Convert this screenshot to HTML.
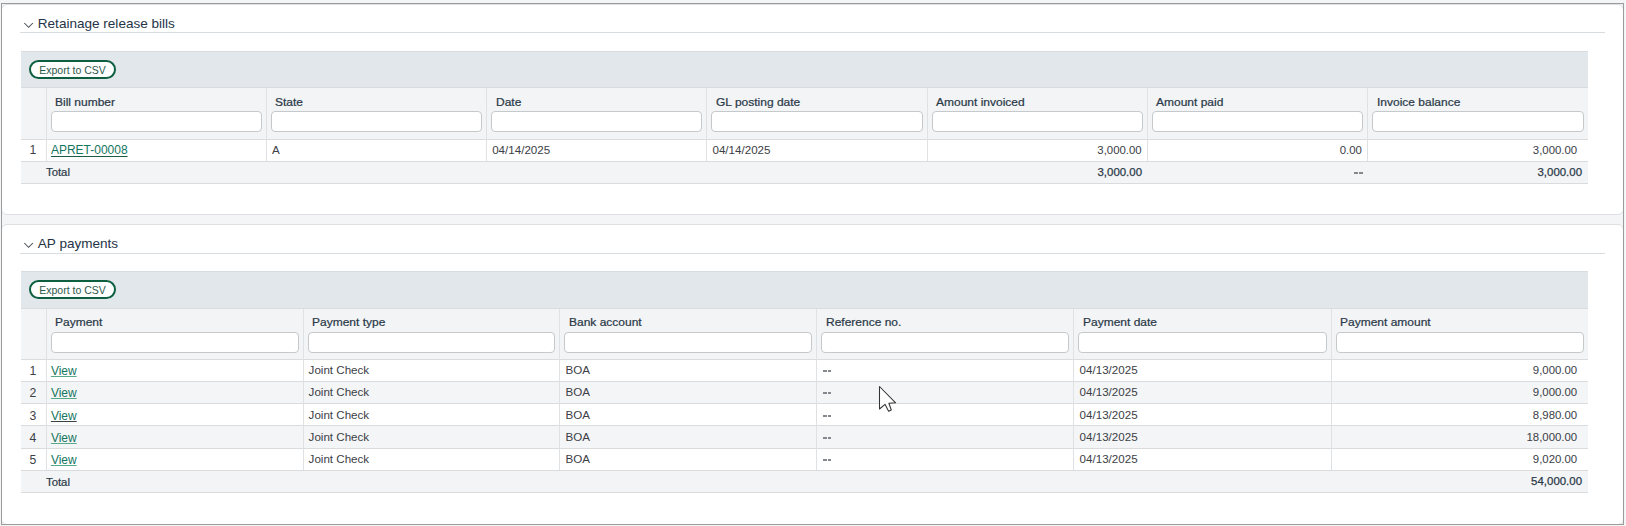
<!DOCTYPE html>
<html><head><meta charset="utf-8"><title>AP payments</title>
<style>
html,body{margin:0;padding:0}
body{width:1626px;height:526px;overflow:hidden;position:relative;background:#f4f5f6;font-family:"Liberation Sans",sans-serif}
.r{position:absolute}
.t{position:absolute;line-height:20px;white-space:nowrap}
.frame{position:absolute;left:1px;top:3px;width:1623px;height:522px;box-sizing:border-box;border:1px solid #9b9b9b;background:#f4f5f7}
.card{position:absolute;left:1px;width:1623px;box-sizing:border-box;border:1px solid #dedfe2;border-radius:6px;background:#fff}
.btn{position:absolute;width:87px;height:19px;box-sizing:border-box;border:2px solid #0d5f3f;border-radius:10px;background:#fff;color:#2b594a;font-size:10.5px;line-height:17.6px;text-align:center;white-space:nowrap}
.inp{position:absolute;box-sizing:border-box;border:1px solid #c5c9cb;border-radius:4px;background:#fff}
</style></head><body>
<div class="frame"></div>
<div class="card" style="top:4px;height:211px"></div>
<div class="card" style="top:224px;height:301px"></div>
<div class="frame" style="background:transparent;z-index:5"></div>
<svg class="r" style="left:22px;top:19.7px" width="14" height="10" viewBox="0 0 14 10"><polyline points="2.3,3 6.6,7.3 10.9,3" fill="none" stroke="#4a4f55" stroke-width="1.05"/></svg>
<div class="t" style="left:37.80px;top:13.75px;font-size:13.55px;color:#253447;font-weight:normal;">Retainage release bills</div>
<div class="r" style="left:20px;top:32px;width:1585px;height:1px;background:#d7dce0"></div>
<div class="r" style="left:21px;top:51px;width:1567px;height:36px;background:#e1e7ea;border-top:1px solid #d6dce0;box-sizing:border-box"></div>
<div class="btn" style="left:29px;top:60px">Export to CSV</div>
<div class="r" style="left:21px;top:87px;width:1567px;height:52px;background:#f3f4f6;border-top:1px solid #d9dbdd;box-sizing:border-box"></div>
<div class="r" style="left:21px;top:139px;width:1567px;height:22px;background:#ffffff;border-top:1px solid #d9dbdd;box-sizing:border-box"></div>
<div class="r" style="left:21px;top:161px;width:1567px;height:23px;background:#f3f4f6;border-top:1px solid #d9dbdd;border-bottom:1px solid #d9dbdd;box-sizing:border-box"></div>
<div class="r" style="left:46px;top:88px;width:1px;height:73px;background:#dfe2e5"></div>
<div class="r" style="left:266px;top:88px;width:1px;height:73px;background:#dfe2e5"></div>
<div class="r" style="left:486px;top:88px;width:1px;height:73px;background:#dfe2e5"></div>
<div class="r" style="left:706px;top:88px;width:1px;height:73px;background:#dfe2e5"></div>
<div class="r" style="left:927px;top:88px;width:1px;height:73px;background:#dfe2e5"></div>
<div class="r" style="left:1147px;top:88px;width:1px;height:73px;background:#dfe2e5"></div>
<div class="r" style="left:1367px;top:88px;width:1px;height:73px;background:#dfe2e5"></div>
<div class="t" style="left:55.00px;top:92.29px;font-size:11.0px;color:#2b3a49;font-weight:normal;-webkit-text-stroke:0.22px #2b3a49;transform:scaleX(1.09);transform-origin:0 0">Bill number</div>
<div class="inp" style="left:51px;top:111px;width:211px;height:21px"></div>
<div class="t" style="left:275.29px;top:92.29px;font-size:11.0px;color:#2b3a49;font-weight:normal;-webkit-text-stroke:0.22px #2b3a49;transform:scaleX(1.09);transform-origin:0 0">State</div>
<div class="inp" style="left:271px;top:111px;width:211px;height:21px"></div>
<div class="t" style="left:495.57px;top:92.29px;font-size:11.0px;color:#2b3a49;font-weight:normal;-webkit-text-stroke:0.22px #2b3a49;transform:scaleX(1.09);transform-origin:0 0">Date</div>
<div class="inp" style="left:491px;top:111px;width:211px;height:21px"></div>
<div class="t" style="left:715.86px;top:92.29px;font-size:11.0px;color:#2b3a49;font-weight:normal;-webkit-text-stroke:0.22px #2b3a49;transform:scaleX(1.09);transform-origin:0 0">GL posting date</div>
<div class="inp" style="left:711px;top:111px;width:212px;height:21px"></div>
<div class="t" style="left:936.14px;top:92.29px;font-size:11.0px;color:#2b3a49;font-weight:normal;-webkit-text-stroke:0.22px #2b3a49;transform:scaleX(1.09);transform-origin:0 0">Amount invoiced</div>
<div class="inp" style="left:932px;top:111px;width:211px;height:21px"></div>
<div class="t" style="left:1156.43px;top:92.29px;font-size:11.0px;color:#2b3a49;font-weight:normal;-webkit-text-stroke:0.22px #2b3a49;transform:scaleX(1.09);transform-origin:0 0">Amount paid</div>
<div class="inp" style="left:1152px;top:111px;width:211px;height:21px"></div>
<div class="t" style="left:1376.71px;top:92.29px;font-size:11.0px;color:#2b3a49;font-weight:normal;-webkit-text-stroke:0.22px #2b3a49;transform:scaleX(1.09);transform-origin:0 0">Invoice balance</div>
<div class="inp" style="left:1372px;top:111px;width:212px;height:21px"></div>
<div class="t" style="left:20.4px;width:25px;top:140.47px;font-size:12.2px;color:#3b4046;text-align:center">1</div>
<div class="t" style="left:50.90px;top:140.44px;font-size:12px;color:#15765f;font-weight:normal;"><span style="text-decoration:underline;text-decoration-color:#1c5c45;text-underline-offset:1.6px;text-decoration-thickness:1.3px">APRET-00008</span></div>
<div class="t" style="left:271.89px;top:139.78px;font-size:11.6px;color:#3b4046;font-weight:normal;">A</div>
<div class="t" style="left:492.17px;top:139.78px;font-size:11.6px;color:#3b4046;font-weight:normal;">04/14/2025</div>
<div class="t" style="left:712.46px;top:139.78px;font-size:11.6px;color:#3b4046;font-weight:normal;">04/14/2025</div>
<div class="t" style="right:484.37px;top:139.85px;font-size:11.4px;color:#3b4046;font-weight:normal;text-align:right;">3,000.00</div>
<div class="t" style="right:264.09px;top:139.85px;font-size:11.4px;color:#3b4046;font-weight:normal;text-align:right;">0.00</div>
<div class="t" style="right:48.80px;top:139.85px;font-size:11.4px;color:#3b4046;font-weight:normal;text-align:right;">3,000.00</div>
<div class="t" style="left:46.00px;top:162.16px;font-size:10.8px;color:#2b3a49;font-weight:normal;-webkit-text-stroke:0.22px #2b3a49;transform:scaleX(1.05);transform-origin:0 0">Total</div>
<div class="t" style="right:484.07px;top:161.76px;font-size:10.8px;color:#2b3a49;font-weight:normal;text-align:right;-webkit-text-stroke:0.25px #2b3a49;transform:scaleX(1.06);transform-origin:100% 0">3,000.00</div>
<div class="r" style="left:1354.21px;top:172.00px;width:3.8px;height:1.7px;background:#85898d"></div>
<div class="r" style="left:1359.11px;top:172.00px;width:3.5px;height:1.7px;background:#85898d"></div>
<div class="t" style="right:43.50px;top:161.76px;font-size:10.8px;color:#2b3a49;font-weight:normal;text-align:right;-webkit-text-stroke:0.25px #2b3a49;transform:scaleX(1.06);transform-origin:100% 0">3,000.00</div>
<svg class="r" style="left:22px;top:239.6px" width="14" height="10" viewBox="0 0 14 10"><polyline points="2.3,3 6.6,7.3 10.9,3" fill="none" stroke="#4a4f55" stroke-width="1.05"/></svg>
<div class="t" style="left:37.80px;top:233.65px;font-size:13.55px;color:#253447;font-weight:normal;">AP payments</div>
<div class="r" style="left:20px;top:253px;width:1585px;height:1px;background:#d7dce0"></div>
<div class="r" style="left:21px;top:271px;width:1567px;height:37px;background:#e1e7ea;border-top:1px solid #d6dce0;box-sizing:border-box"></div>
<div class="btn" style="left:29px;top:280px">Export to CSV</div>
<div class="r" style="left:21px;top:308px;width:1567px;height:51px;background:#f3f4f6;border-top:1px solid #d9dbdd;box-sizing:border-box"></div>
<div class="r" style="left:21px;top:359px;width:1567px;height:22px;background:#ffffff;border-top:1px solid #d9dbdd;box-sizing:border-box"></div>
<div class="r" style="left:21px;top:381px;width:1567px;height:22px;background:#f4f5f6;border-top:1px solid #d9dbdd;box-sizing:border-box"></div>
<div class="r" style="left:21px;top:403px;width:1567px;height:22px;background:#ffffff;border-top:1px solid #d9dbdd;box-sizing:border-box"></div>
<div class="r" style="left:21px;top:425px;width:1567px;height:23px;background:#f4f5f6;border-top:1px solid #d9dbdd;box-sizing:border-box"></div>
<div class="r" style="left:21px;top:448px;width:1567px;height:22px;background:#ffffff;border-top:1px solid #d9dbdd;box-sizing:border-box"></div>
<div class="r" style="left:21px;top:470px;width:1567px;height:23px;background:#f3f4f6;border-top:1px solid #d9dbdd;border-bottom:1px solid #d9dbdd;box-sizing:border-box"></div>
<div class="r" style="left:46px;top:309px;width:1px;height:161px;background:#dfe2e5"></div>
<div class="r" style="left:303px;top:309px;width:1px;height:161px;background:#dfe2e5"></div>
<div class="r" style="left:559px;top:309px;width:1px;height:161px;background:#dfe2e5"></div>
<div class="r" style="left:816px;top:309px;width:1px;height:161px;background:#dfe2e5"></div>
<div class="r" style="left:1073px;top:309px;width:1px;height:161px;background:#dfe2e5"></div>
<div class="r" style="left:1331px;top:309px;width:1px;height:161px;background:#dfe2e5"></div>
<div class="t" style="left:55.00px;top:311.99px;font-size:11.0px;color:#2b3a49;font-weight:normal;-webkit-text-stroke:0.22px #2b3a49;transform:scaleX(1.09);transform-origin:0 0">Payment</div>
<div class="inp" style="left:51px;top:332px;width:248px;height:21px"></div>
<div class="t" style="left:312.00px;top:311.99px;font-size:11.0px;color:#2b3a49;font-weight:normal;-webkit-text-stroke:0.22px #2b3a49;transform:scaleX(1.09);transform-origin:0 0">Payment type</div>
<div class="inp" style="left:308px;top:332px;width:247px;height:21px"></div>
<div class="t" style="left:569.00px;top:311.99px;font-size:11.0px;color:#2b3a49;font-weight:normal;-webkit-text-stroke:0.22px #2b3a49;transform:scaleX(1.09);transform-origin:0 0">Bank account</div>
<div class="inp" style="left:564px;top:332px;width:248px;height:21px"></div>
<div class="t" style="left:826.00px;top:311.99px;font-size:11.0px;color:#2b3a49;font-weight:normal;-webkit-text-stroke:0.22px #2b3a49;transform:scaleX(1.09);transform-origin:0 0">Reference no.</div>
<div class="inp" style="left:821px;top:332px;width:248px;height:21px"></div>
<div class="t" style="left:1083.00px;top:311.99px;font-size:11.0px;color:#2b3a49;font-weight:normal;-webkit-text-stroke:0.22px #2b3a49;transform:scaleX(1.09);transform-origin:0 0">Payment date</div>
<div class="inp" style="left:1078px;top:332px;width:249px;height:21px"></div>
<div class="t" style="left:1340.00px;top:311.99px;font-size:11.0px;color:#2b3a49;font-weight:normal;-webkit-text-stroke:0.22px #2b3a49;transform:scaleX(1.09);transform-origin:0 0">Payment amount</div>
<div class="inp" style="left:1336px;top:332px;width:248px;height:21px"></div>
<div class="t" style="left:20.4px;width:25px;top:360.67px;font-size:12.2px;color:#3b4046;text-align:center">1</div>
<div class="t" style="left:50.90px;top:360.64px;font-size:12px;color:#15765f;font-weight:normal;"><span style="text-decoration:underline;text-decoration-color:#5aa88c;text-underline-offset:1px;text-decoration-thickness:1.3px">View</span></div>
<div class="t" style="left:308.60px;top:359.98px;font-size:11.6px;color:#3b4046;font-weight:normal;">Joint Check</div>
<div class="t" style="left:565.60px;top:359.98px;font-size:11.6px;color:#3b4046;font-weight:normal;">BOA</div>
<div class="r" style="left:823.00px;top:370.20px;width:3.8px;height:1.7px;background:#85898d"></div>
<div class="r" style="left:827.90px;top:370.20px;width:3.5px;height:1.7px;background:#85898d"></div>
<div class="t" style="left:1079.60px;top:359.98px;font-size:11.6px;color:#3b4046;font-weight:normal;">04/13/2025</div>
<div class="t" style="right:48.80px;top:360.05px;font-size:11.4px;color:#3b4046;font-weight:normal;text-align:right;">9,000.00</div>
<div class="t" style="left:20.4px;width:25px;top:382.67px;font-size:12.2px;color:#3b4046;text-align:center">2</div>
<div class="t" style="left:50.90px;top:382.64px;font-size:12px;color:#15765f;font-weight:normal;"><span style="text-decoration:underline;text-decoration-color:#5aa88c;text-underline-offset:1px;text-decoration-thickness:1.3px">View</span></div>
<div class="t" style="left:308.60px;top:381.98px;font-size:11.6px;color:#3b4046;font-weight:normal;">Joint Check</div>
<div class="t" style="left:565.60px;top:381.98px;font-size:11.6px;color:#3b4046;font-weight:normal;">BOA</div>
<div class="r" style="left:823.00px;top:392.20px;width:3.8px;height:1.7px;background:#85898d"></div>
<div class="r" style="left:827.90px;top:392.20px;width:3.5px;height:1.7px;background:#85898d"></div>
<div class="t" style="left:1079.60px;top:381.98px;font-size:11.6px;color:#3b4046;font-weight:normal;">04/13/2025</div>
<div class="t" style="right:48.80px;top:382.05px;font-size:11.4px;color:#3b4046;font-weight:normal;text-align:right;">9,000.00</div>
<div class="t" style="left:20.4px;width:25px;top:405.67px;font-size:12.2px;color:#3b4046;text-align:center">3</div>
<div class="t" style="left:50.90px;top:405.64px;font-size:12px;color:#15765f;font-weight:normal;"><span style="text-decoration:underline;text-decoration-color:#3d4145;text-underline-offset:1px;text-decoration-thickness:1.3px">View</span></div>
<div class="t" style="left:308.60px;top:404.98px;font-size:11.6px;color:#3b4046;font-weight:normal;">Joint Check</div>
<div class="t" style="left:565.60px;top:404.98px;font-size:11.6px;color:#3b4046;font-weight:normal;">BOA</div>
<div class="r" style="left:823.00px;top:415.20px;width:3.8px;height:1.7px;background:#85898d"></div>
<div class="r" style="left:827.90px;top:415.20px;width:3.5px;height:1.7px;background:#85898d"></div>
<div class="t" style="left:1079.60px;top:404.98px;font-size:11.6px;color:#3b4046;font-weight:normal;">04/13/2025</div>
<div class="t" style="right:48.80px;top:405.05px;font-size:11.4px;color:#3b4046;font-weight:normal;text-align:right;">8,980.00</div>
<div class="t" style="left:20.4px;width:25px;top:427.67px;font-size:12.2px;color:#3b4046;text-align:center">4</div>
<div class="t" style="left:50.90px;top:427.64px;font-size:12px;color:#15765f;font-weight:normal;"><span style="text-decoration:underline;text-decoration-color:#5aa88c;text-underline-offset:1px;text-decoration-thickness:1.3px">View</span></div>
<div class="t" style="left:308.60px;top:426.98px;font-size:11.6px;color:#3b4046;font-weight:normal;">Joint Check</div>
<div class="t" style="left:565.60px;top:426.98px;font-size:11.6px;color:#3b4046;font-weight:normal;">BOA</div>
<div class="r" style="left:823.00px;top:437.20px;width:3.8px;height:1.7px;background:#85898d"></div>
<div class="r" style="left:827.90px;top:437.20px;width:3.5px;height:1.7px;background:#85898d"></div>
<div class="t" style="left:1079.60px;top:426.98px;font-size:11.6px;color:#3b4046;font-weight:normal;">04/13/2025</div>
<div class="t" style="right:48.80px;top:427.05px;font-size:11.4px;color:#3b4046;font-weight:normal;text-align:right;">18,000.00</div>
<div class="t" style="left:20.4px;width:25px;top:449.67px;font-size:12.2px;color:#3b4046;text-align:center">5</div>
<div class="t" style="left:50.90px;top:449.64px;font-size:12px;color:#15765f;font-weight:normal;"><span style="text-decoration:underline;text-decoration-color:#5aa88c;text-underline-offset:1px;text-decoration-thickness:1.3px">View</span></div>
<div class="t" style="left:308.60px;top:448.98px;font-size:11.6px;color:#3b4046;font-weight:normal;">Joint Check</div>
<div class="t" style="left:565.60px;top:448.98px;font-size:11.6px;color:#3b4046;font-weight:normal;">BOA</div>
<div class="r" style="left:823.00px;top:459.20px;width:3.8px;height:1.7px;background:#85898d"></div>
<div class="r" style="left:827.90px;top:459.20px;width:3.5px;height:1.7px;background:#85898d"></div>
<div class="t" style="left:1079.60px;top:448.98px;font-size:11.6px;color:#3b4046;font-weight:normal;">04/13/2025</div>
<div class="t" style="right:48.80px;top:449.05px;font-size:11.4px;color:#3b4046;font-weight:normal;text-align:right;">9,020.00</div>
<div class="t" style="left:46.00px;top:471.66px;font-size:10.8px;color:#2b3a49;font-weight:normal;-webkit-text-stroke:0.22px #2b3a49;transform:scaleX(1.05);transform-origin:0 0">Total</div>
<div class="t" style="right:43.50px;top:470.66px;font-size:10.8px;color:#2b3a49;font-weight:normal;text-align:right;-webkit-text-stroke:0.25px #2b3a49;transform:scaleX(1.06);transform-origin:100% 0">54,000.00</div>
<svg class="r" style="left:876px;top:383px" width="24" height="32" viewBox="876 383 24 32"><polygon points="879.5,386.5 879.5,409 885,404.3 888.6,411.2 891.3,410 888.9,403.3 895.6,402.8" fill="#fff" stroke="#333" stroke-width="1.05" stroke-linejoin="round"/></svg>
</body></html>
